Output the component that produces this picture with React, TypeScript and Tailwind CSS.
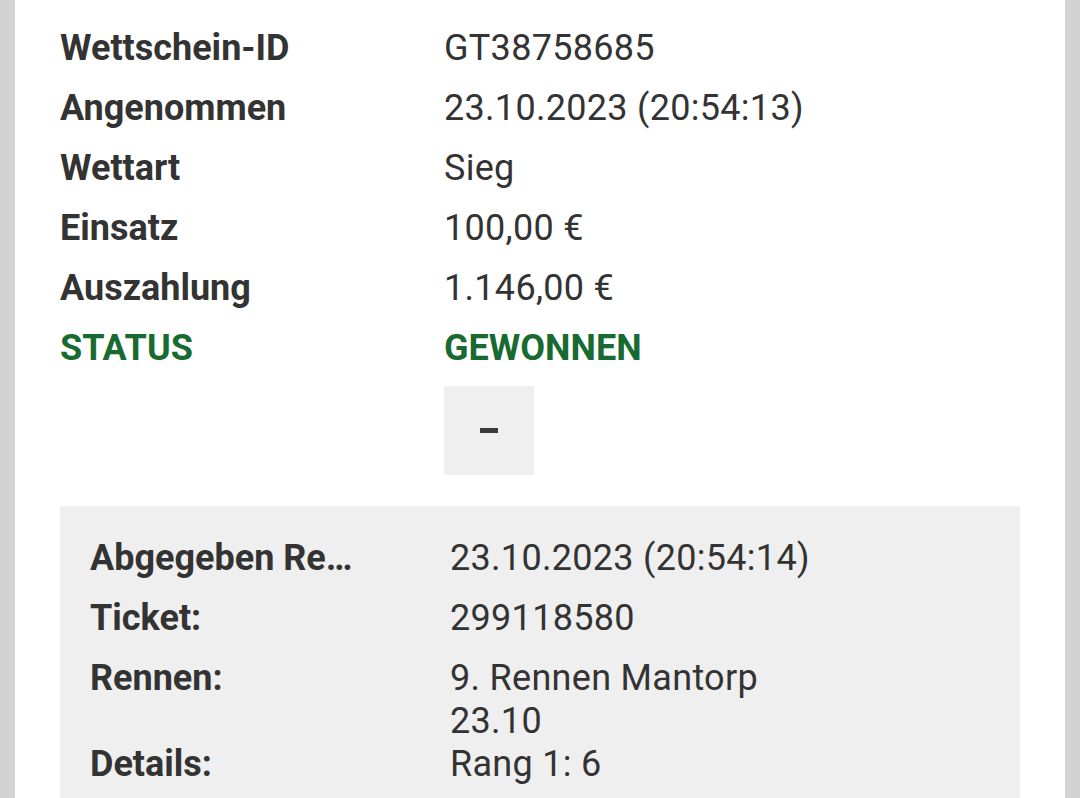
import React from 'react';

const font = { fontFamily: 'Roboto, "Noto Sans", Arial, sans-serif' };

type Row = { label: string; value: React.ReactNode; green?: boolean };

const summary: Row[] = [
  { label: 'Wettschein-ID', value: 'GT38758685' },
  { label: 'Angenommen', value: '23.10.2023 (20:54:13)' },
  { label: 'Wettart', value: 'Sieg' },
  { label: 'Einsatz', value: '100,00 €' },
  { label: 'Auszahlung', value: '1.146,00 €' },
  { label: 'STATUS', value: 'GEWONNEN', green: true },
];

const App: React.FC = () => {
  return (
    <div className="w-[1080px] h-[798px] overflow-hidden bg-[#d3d3d3] px-[15px]" style={font}>
      <div className="h-full bg-white pl-[45px] pr-[45px] pt-[27px]">
        <div className="flex flex-col gap-[17px]">
          {summary.map(row => (
            <div key={row.label} className="flex text-[36px] leading-[43px]">
              <div
                className={`w-[384px] shrink-0 font-bold ${row.green ? 'text-[#176b31]' : 'text-[#333333]'}`}
              >
                {row.label}
              </div>
              <div className={row.green ? 'font-bold text-[#176b31]' : 'tracking-[0.3px] text-[#333333]'}>
                {row.value}
              </div>
            </div>
          ))}
        </div>

        <div className="mt-[16px] ml-[384px] flex h-[89px] w-[90px] items-center justify-center bg-[#efefef]">
          <span className="block h-[5px] w-[18px] bg-[#3a3a3a]"></span>
        </div>

        <div className="mt-[31px] w-[960px] h-[400px] bg-[#efefef] pl-[30px] pt-[31px] text-[36px] leading-[43px] text-[#333333]">
          <div className="flex">
            <div className="w-[360px] shrink-0 pr-[90px] font-bold">
              <div className="truncate">Abgegeben Rennen</div>
            </div>
            <div className="tracking-[0.3px]">23.10.2023 (20:54:14)</div>
          </div>
          <div className="mt-[17px] flex">
            <div className="w-[360px] shrink-0 font-bold">Ticket:</div>
            <div className="tracking-[0.3px]">299118580</div>
          </div>
          <div className="mt-[17px] flex">
            <div className="w-[360px] shrink-0 font-bold">Rennen:</div>
            <div className="tracking-[0.3px]">
              9. Rennen Mantorp
              <br />
              23.10
            </div>
          </div>
          <div className="flex">
            <div className="w-[360px] shrink-0 font-bold">Details:</div>
            <div className="tracking-[0.3px]">Rang 1: 6</div>
          </div>
        </div>
      </div>
    </div>
  );
};

export default App;
